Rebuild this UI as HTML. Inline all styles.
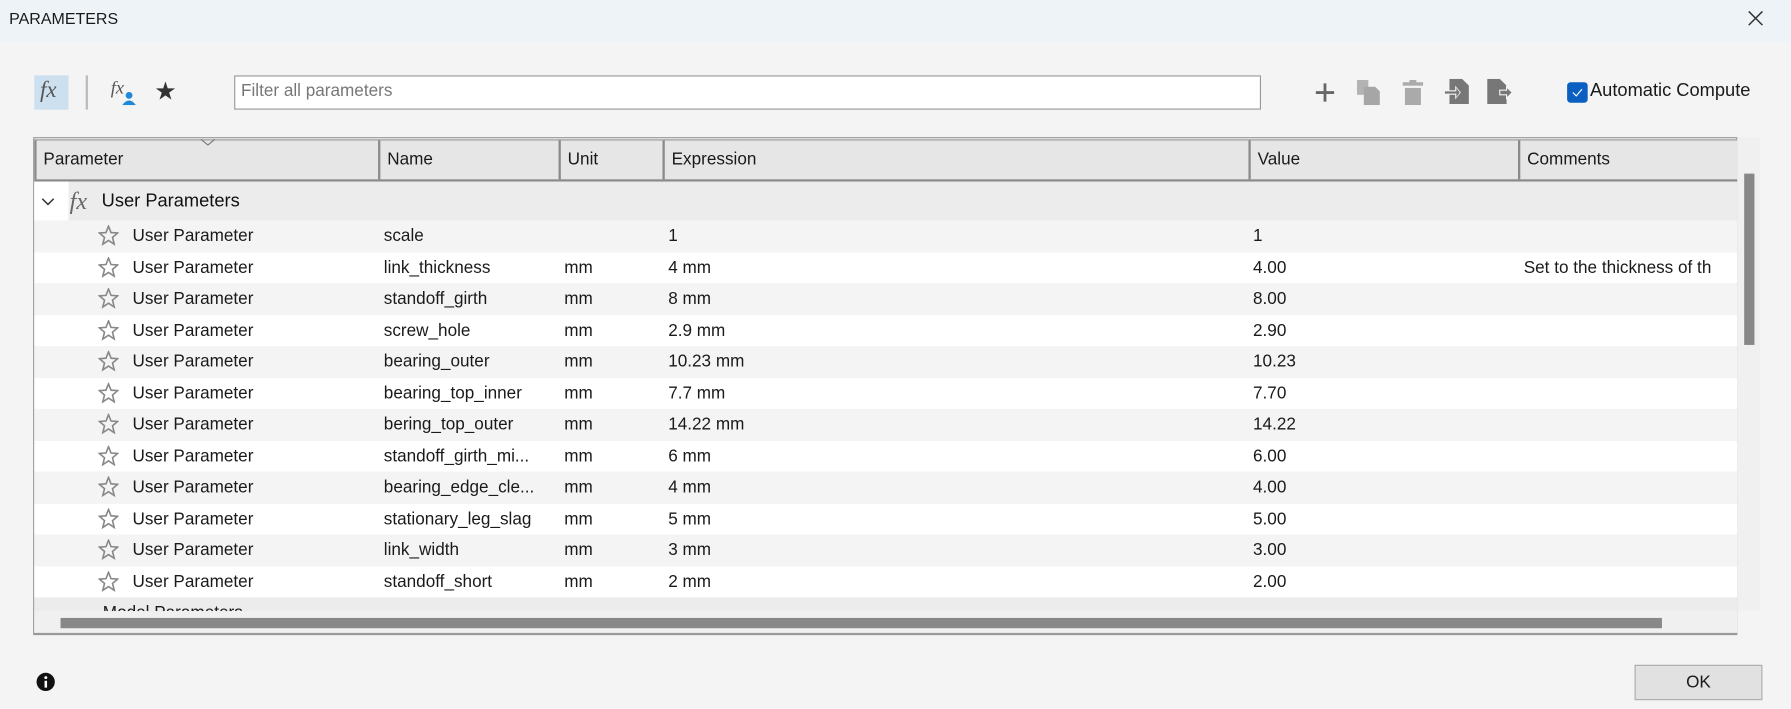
<!DOCTYPE html>
<html><head><meta charset="utf-8"><style>
html,body{margin:0;padding:0;width:1791px;height:709px;overflow:hidden;background:#f4f4f4;}
#w{position:absolute;left:0;top:0;width:1568px;height:621px;transform:scale(1.14222);transform-origin:0 0;font-family:"Liberation Sans",sans-serif;color:#1a1a1a;font-size:15px;}
.a{position:absolute;}
.title{left:0;top:0;width:1568px;height:37px;background:#eef3f7;}
.hd{top:122px;height:34px;background:#e6e6e6;border-top:1px solid #999;border-bottom:2px solid #8a8a8a;}
.col{position:absolute;top:0;height:34px;border-left:2px solid #8a8a8a;line-height:34px;padding-left:6px;box-sizing:border-box;}
.row{position:absolute;left:30px;width:1491px;height:27.5px;line-height:27.5px;}
.row span{position:absolute;}
.row svg{position:absolute;left:56px;top:4px;}
</style></head><body><div id="w">
<div class="a title"></div>
<div class="a" style="left:8px;top:8px;font-size:14px">PARAMETERS</div>
<svg class="a" style="left:1530px;top:9px" width="14" height="14"><path d="M1 1L13 13M13 1L1 13" stroke="#333" stroke-width="1.3"/></svg>

<div class="a" style="left:30px;top:66px;width:30px;height:30px;background:#cde0f0"></div>
<div class="a" style="left:35px;top:68px;font-family:'Liberation Serif',serif;font-style:italic;font-size:20px;color:#555">fx</div>
<div class="a" style="left:75px;top:66px;width:2px;height:30px;background:#bbb"></div>
<div class="a" style="left:97px;top:69px;font-family:'Liberation Serif',serif;font-style:italic;font-size:16px;color:#555">fx</div>
<svg class="a" style="left:107px;top:80px" width="12" height="12"><circle cx="6" cy="3.5" r="3" fill="#1e88d8"/><path d="M0 12Q6 4 12 12Z" fill="#1e88d8"/></svg>
<div class="a" style="left:135px;top:67px;font-size:22px;color:#333">★</div>
<div class="a" style="left:205px;top:66px;width:897px;height:28px;background:#fff;border:1px solid #999;box-sizing:content-box"></div>
<div class="a" style="left:211px;top:71px;color:#777">Filter all parameters</div>
<svg class="a" style="left:1151px;top:72px" width="18" height="18"><path d="M9 1V17M1 9H17" stroke="#666" stroke-width="2.5"/></svg>
<svg class="a" style="left:1188px;top:70px" width="24" height="22"><rect x="0" y="0" width="10" height="13" fill="#b3b3b3"/><path d="M6 6H16L20 10V22H6Z" fill="#a6a6a6"/></svg>
<svg class="a" style="left:1228px;top:70px" width="18" height="22"><rect x="0" y="2" width="18" height="3" fill="#aaa"/><rect x="6" y="0" width="6" height="3" fill="#aaa"/><rect x="2" y="7" width="14" height="15" fill="#aaa"/></svg>
<svg class="a" style="left:1264px;top:69px" width="22" height="22"><path d="M5 0H16L22 6V22H5Z" fill="#777"/><path d="M0 10H10V6L15 12L10 18V14H0Z" fill="#f4f4f4"/><path d="M1 11H11V8L14 12L11 16V13H1Z" fill="#777"/></svg>
<svg class="a" style="left:1302px;top:69px" width="24" height="22"><path d="M0 0H11L17 6V22H0Z" fill="#777"/><path d="M11 10H17V7L22 12L17 17V14H11Z" fill="#777" stroke="#f4f4f4" stroke-width="1"/></svg>
<div class="a" style="left:1372px;top:72px;width:18px;height:18px;background:#0a5fc0;border-radius:3px"></div>
<svg class="a" style="left:1372px;top:72px" width="18" height="18"><path d="M5 9L8 12L13 6" stroke="#fff" stroke-width="1" fill="none"/></svg>
<div class="a" style="left:1392px;top:71px;font-size:16px">Automatic Compute</div>

<div class="a" style="left:29px;top:120px;width:1492px;height:436px;border:1px solid #999;border-bottom:2px solid #999;background:#f0f0f0;box-sizing:border-box"></div>
<div class="a hd" style="left:30px;width:1491px">
<div class="col" style="left:0;width:301px">Parameter</div>
<div class="col" style="left:301px;width:158px">Name</div>
<div class="col" style="left:459px;width:91px">Unit</div>
<div class="col" style="left:550px;width:513px">Expression</div>
<div class="col" style="left:1063px;width:236px">Value</div>
<div class="col" style="left:1299px;width:192px">Comments</div>
</div>
<svg class="a" style="left:174px;top:121px" width="16" height="8"><path d="M2 1L8 6L14 1" stroke="#777" fill="none"/></svg>
<div class="a" style="left:30px;top:159px;width:1491px;height:34px;background:#ececec"></div>
<div class="a" style="left:30px;top:159px;width:30px;height:34px;background:#fff"></div>
<svg class="a" style="left:36px;top:173px" width="12" height="8"><path d="M1 1L6 6L11 1" stroke="#333" fill="none" stroke-width="1.3"/></svg>
<div class="a" style="left:61px;top:164px;font-family:'Liberation Serif',serif;font-style:italic;font-size:21px;color:#666">fx</div>
<div class="a" style="left:89px;top:168px;font-size:16px;color:#111">User Parameters</div>

<div id="rows"></div>
<div class="a" style="left:30px;top:523px;width:1491px;height:12px;background:#ececec;overflow:hidden"><div style="position:absolute;left:60px;top:5px;font-size:15px">Model Parameters</div></div>
<div class="a" style="left:30px;top:535px;width:1491px;height:19px;background:#f0f0f0"></div>
<div class="a" style="left:53px;top:541px;width:1402px;height:9px;background:#888"></div>
<div class="a" style="left:1521px;top:120px;width:20px;height:415px;background:#f0f0f0"></div>
<div class="a" style="left:1527px;top:152px;width:9px;height:150px;background:#888"></div>

<svg class="a" style="left:31px;top:588px" width="18" height="18"><circle cx="9" cy="9" r="8" fill="#111"/><rect x="8" y="8" width="2.2" height="6" fill="#fff"/><circle cx="9.1" cy="5.2" r="1.3" fill="#fff"/></svg>
<div class="a" style="left:1431px;top:582px;width:112px;height:31px;background:#e1e1e1;border:1px solid #adadad;box-sizing:border-box;text-align:center;line-height:29px">OK</div>
</div>
<script>
var d=[["scale","","1","1",""],["link_thickness","mm","4 mm","4.00","Set to the thickness of th"],["standoff_girth","mm","8 mm","8.00",""],["screw_hole","mm","2.9 mm","2.90",""],["bearing_outer","mm","10.23 mm","10.23",""],["bearing_top_inner","mm","7.7 mm","7.70",""],["bering_top_outer","mm","14.22 mm","14.22",""],["standoff_girth_mi...","mm","6 mm","6.00",""],["bearing_edge_cle...","mm","4 mm","4.00",""],["stationary_leg_slag","mm","5 mm","5.00",""],["link_width","mm","3 mm","3.00",""],["standoff_short","mm","2 mm","2.00",""]];
var star='<svg width="18" height="18" viewBox="0 0 18 18"><path d="M9 1L11.2 6.6L17 7L12.5 10.8L14 16.8L9 13.5L4 16.8L5.5 10.8L1 7L6.8 6.6Z" fill="none" stroke="#888" stroke-width="1.4"/></svg>';
var h="";d.forEach(function(r,i){var t=193+i*27.5;h+='<div class="row" style="top:'+t+'px;background:'+(i%2?'#fff':'#f4f4f4')+'">'+star+'<span style="left:86px">User Parameter</span><span style="left:306px">'+r[0]+'</span><span style="left:464px">'+r[1]+'</span><span style="left:555px">'+r[2]+'</span><span style="left:1067px">'+r[3]+'</span><span style="left:1304px;white-space:nowrap;width:187px;overflow:hidden">'+r[4]+'</span></div>';});
document.getElementById("rows").outerHTML=h;
</script>
</body></html>
